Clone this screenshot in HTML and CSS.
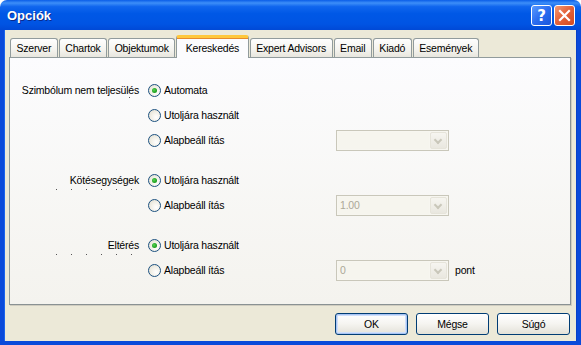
FILE: index.html
```html
<!DOCTYPE html>
<html lang="hu">
<head>
    <meta charset="UTF-8">
    <title>Opciók</title>
    <link rel="stylesheet" href="styles.css">
</head>
<body>
    <div class="window">
        <div class="titlebar">
            <span class="title">Opciók</span>
            <div class="caption-buttons">
                <span class="cap-btn help">?</span>
                <span class="cap-btn close">
                    <svg width="13" height="13" viewBox="0 0 13 13">
                        <path d="M2 2 L11 11 M11 2 L2 11" stroke="#fff" stroke-width="2.2" stroke-linecap="square"/>
                    </svg>
                </span>
            </div>
        </div>

        <div class="frame">
            <div class="tabs">
                <span class="tab">Szerver</span>
                <span class="tab">Chartok</span>
                <span class="tab">Objektumok</span>
                <span class="tab active">Kereskedés</span>
                <span class="tab">Expert Advisors</span>
                <span class="tab">Email</span>
                <span class="tab">Kiadó</span>
                <span class="tab">Események</span>
            </div>

            <div class="panel">
                <div class="group">
                    <div class="row">
                        <span class="lbl dot-one">Szimbólum nem teljesülés</span>
                        <label class="radio checked"><span class="circle"></span>Automata</label>
                    </div>
                    <div class="row">
                        <span class="lbl"></span>
                        <label class="radio"><span class="circle"></span>Utoljára használt</label>
                    </div>
                    <div class="row">
                        <span class="lbl"></span>
                        <label class="radio"><span class="circle"></span>Alapbeáll ítás</label>
                        <div class="combo"><span class="value"></span><span class="drop"></span></div>
                    </div>
                </div>

                <div class="group">
                    <div class="row">
                        <span class="lbl dots">Kötésegységek</span>
                        <label class="radio checked"><span class="circle"></span>Utoljára használt</label>
                    </div>
                    <div class="row">
                        <span class="lbl"></span>
                        <label class="radio"><span class="circle"></span>Alapbeáll ítás</label>
                        <div class="combo"><span class="value">1.00</span><span class="drop"></span></div>
                    </div>
                </div>

                <div class="group">
                    <div class="row">
                        <span class="lbl dots">Eltérés</span>
                        <label class="radio checked"><span class="circle"></span>Utoljára használt</label>
                    </div>
                    <div class="row">
                        <span class="lbl"></span>
                        <label class="radio"><span class="circle"></span>Alapbeáll ítás</label>
                        <div class="combo"><span class="value">0</span><span class="drop"></span></div>
                        <span class="unit">pont</span>
                    </div>
                </div>
            </div>

            <div class="buttons">
                <button class="btn default">OK</button>
                <button class="btn">Mégse</button>
                <button class="btn">Súgó</button>
            </div>
        </div>
    </div>
</body>
</html>
```

FILE: styles.css
```css
body {
    margin: 0;
    background: #fff;
    font-family: 'Liberation Sans', Arial, sans-serif;
    font-size: 10.5px;
    letter-spacing: -0.2px;
    color: #000;
}

.window {
    width: 581px;
    height: 345px;
    display: flex;
    flex-direction: column;
}

/* title bar */
.titlebar {
    height: 30px;
    display: flex;
    align-items: center;
    justify-content: space-between;
    padding: 0 6px 0 7px;
    border-radius: 7px 7px 0 0;
    background: linear-gradient(to bottom, #0a5de8 0%, #3d8ff8 10%, #1066ee 22%, #0058e6 45%, #0054e3 80%, #0049d6 100%);
    box-sizing: border-box;
}

.title {
    color: #fff;
    font-weight: bold;
    font-size: 13px;
    letter-spacing: 0;
    text-shadow: 1px 1px 0 #0a2a8a;
    margin-top: 1px;
}

.caption-buttons {
    display: flex;
    gap: 2px;
    margin-top: 1px;
}

.cap-btn {
    width: 21px;
    height: 21px;
    box-sizing: border-box;
    border: 1px solid #fff;
    border-radius: 3px;
    display: flex;
    align-items: center;
    justify-content: center;
    color: #fff;
}

.help {
    background: linear-gradient(135deg, #5a9bff 0%, #2a6cf0 50%, #1a56dc 100%);
    font-family: 'DejaVu Sans', sans-serif;
    font-weight: bold;
    font-size: 15px;
    letter-spacing: 0;
}

.close {
    background: linear-gradient(135deg, #f39a74 0%, #e4643c 45%, #d04a22 100%);
}

/* frame */
.frame {
    flex: 1;
    background: #ece9d8;
    border: 4px solid #0a4ada;
    border-top: none;
    box-shadow: inset 1px 0 0 #1a64ee, inset -1px 0 0 #0840c8;
    padding: 5px 7px 6px 5px;
    display: flex;
    flex-direction: column;
}

.tabs {
    display: flex;
    align-items: flex-end;
    padding-left: 1px;
    height: 22px;
    position: relative;
    z-index: 1;
}

.tab {
    height: 19px;
    box-sizing: border-box;
    padding: 0 5.5px;
    margin-right: 1px;
    display: flex;
    align-items: center;
    border: 1px solid #919b9c;
    border-bottom: none;
    border-radius: 3px 3px 0 0;
    background: linear-gradient(to bottom, #fefefe 0%, #f4f3ee 60%, #e8e6de 100%);
    white-space: nowrap;
}

.tab.active {
    padding: 0 8.5px;
    margin: 0 1px -1px 0;
    height: 23px;
    border-top: 3px solid #ffc83c;
    box-shadow: inset 0 1px 0 #e68b2c;
    background: #fcfcfe;
}

.panel {
    width: 562px;
    height: 248px;
    box-sizing: border-box;
    border: 1px solid #919b9c;
    border-right-color: #8a9293;
    border-bottom-color: #8a9293;
    box-shadow: 1px 1px 0 #d0cdc0;
    background: linear-gradient(to bottom, #fcfcfe 0%, #f4f3ee 100%);
    padding-top: 20px;
}

.group {
    display: flex;
    flex-direction: column;
    gap: 1px;
    margin-bottom: 16px;
}

.row {
    height: 24px;
    display: flex;
    align-items: center;
}

.lbl {
    width: 138px;
    box-sizing: border-box;
    padding-right: 9px;
    text-align: right;
    align-self: stretch;
    display: flex;
    align-items: center;
    justify-content: flex-end;
}

.lbl.dots {
    background-image: repeating-linear-gradient(to right, #555 0 1px, transparent 1px 15px);
    background-size: 77px 1px;
    background-position: 46px 21px;
    background-repeat: no-repeat;
}

.lbl.dot-one {
    background-image: linear-gradient(#555, #555);
    background-size: 1px 1px;
    background-position: 119px 19px;
    background-repeat: no-repeat;
}

.radio {
    width: 188px;
    display: flex;
    align-items: center;
    gap: 3px;
}

.circle {
    width: 13px;
    height: 13px;
    box-sizing: border-box;
    border: 1px solid #1c5180;
    border-radius: 50%;
    background: radial-gradient(circle at 65% 65%, #fff 0%, #f1efe6 50%, #dcd9cc 100%);
    display: flex;
    align-items: center;
    justify-content: center;
}

.radio.checked .circle::after {
    content: "";
    width: 5px;
    height: 5px;
    border-radius: 50%;
    background: radial-gradient(circle at 40% 40%, #55d455 0%, #21a121 60%, #1a8a1a 100%);
}

.combo {
    width: 113px;
    height: 21px;
    box-sizing: border-box;
    border: 1px solid #c9c7ba;
    background: #f7f6f0;
    display: flex;
    align-items: stretch;
    padding: 1px;
    gap: 1px;
}

.value {
    flex: 1;
    color: #aca899;
    padding-left: 2px;
    display: flex;
    align-items: center;
    background: #f6f5ee;
}

.drop {
    width: 15px;
    border: 1px solid #e6e4da;
    border-radius: 2px;
    background: linear-gradient(to bottom, #f6f5f0, #e9e7df);
    position: relative;
}

.drop::after {
    content: "";
    position: absolute;
    left: 4px;
    top: 4px;
    width: 4px;
    height: 4px;
    border-right: 2px solid #c9c7ba;
    border-bottom: 2px solid #c9c7ba;
    transform: rotate(45deg);
}

.unit {
    margin-left: 6px;
}

/* bottom buttons */
.buttons {
    margin-top: auto;
    display: flex;
    justify-content: flex-end;
    gap: 8px;
}

.btn {
    width: 73px;
    height: 22px;
    box-sizing: border-box;
    border: 1px solid #003c74;
    border-radius: 3px;
    background: linear-gradient(to bottom, #ffffff 0%, #f5f4f0 50%, #e3e1d8 100%);
    font-family: 'Liberation Sans', Arial, sans-serif;
    font-size: 10.5px;
    letter-spacing: -0.2px;
    color: #000;
    padding: 0;
}

.btn.default {
    box-shadow: inset 0 0 0 1px #a8c4f4, inset 0 0 0 2px #cfdffa;
}
```
